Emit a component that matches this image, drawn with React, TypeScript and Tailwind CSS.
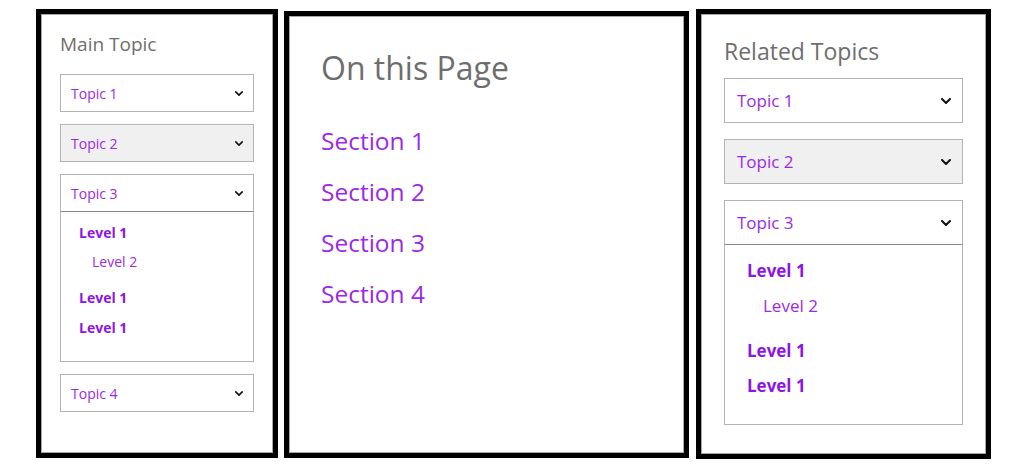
import type { ReactNode } from "react";

const font = { fontFamily: '"Open Sans", "Noto Sans", sans-serif' };

function Chevron({ className }: { className?: string }) {
  return (
    <svg viewBox="0 0 10 6" className={className} fill="none">
      <polyline
        points="1,1 5,5 9,1"
        stroke="#111"
        strokeWidth="2"
        strokeLinecap="round"
        strokeLinejoin="round"
      />
    </svg>
  );
}

function Frame({
  className,
  children,
}: {
  className?: string;
  children: ReactNode;
}) {
  return (
    <section
      className={
        "flex flex-col border-[5px] border-black bg-white shadow-[inset_0_0_0_1px_#a8a8a8] " +
        (className ?? "")
      }
    >
      {children}
    </section>
  );
}

// small dropdown row (left panel)
function SmallTopic({ label, shaded }: { label: string; shaded?: boolean }) {
  return (
    <div
      className={
        "flex h-[38px] items-center justify-between border border-[#b3b3b3] pl-[10px] pr-[10px] text-[14px] text-[#9a2ae6] " +
        (shaded ? "bg-[#f1f0f1]" : "bg-white")
      }
    >
      <span>{label}</span>
      <Chevron className="h-[5px] w-[8px]" />
    </div>
  );
}

function LargeTopic({ label, shaded }: { label: string; shaded?: boolean }) {
  return (
    <div
      className={
        "flex h-[45px] items-center justify-between border border-[#b3b3b3] pl-[12px] pr-[11px] text-[17px] text-[#9a2ae6] " +
        (shaded ? "bg-[#f1f0f1]" : "bg-white")
      }
    >
      <span>{label}</span>
      <Chevron className="h-[6px] w-[10px]" />
    </div>
  );
}

export default function App() {
  return (
    <div className="flex h-[473px] w-[1024px] bg-white pl-[36px] pt-[9px]" style={font}>
      {/* Main Topic */}
      <Frame className="h-[449px] w-[242px]">
        <div className="flex flex-col px-[19px] pt-[16px]">
          <h2 className="h-[29px] text-[19px] leading-[29px] text-[#6e6e6e]">Main Topic</h2>
          <div className="mt-[15px] flex flex-col">
            <SmallTopic label="Topic 1" />
            <div className="mt-[12px]">
              <SmallTopic label="Topic 2" shaded />
            </div>
            <div className="mt-[12px] flex flex-col">
              <div className="flex h-[38px] items-center justify-between border border-[#b3b3b3] border-b-[#8a8a8a] pl-[10px] pr-[10px] text-[14px] text-[#9a2ae6]">
                <span>Topic 3</span>
                <Chevron className="h-[5px] w-[8px]" />
              </div>
              <ul className="flex h-[150px] flex-col border border-t-0 border-[#b3b3b3] pl-[18px] pt-[10px]">
                <li className="h-[22px] text-[14px] font-bold leading-[22px] text-[#8d14e6]">Level 1</li>
                <li className="mt-[7px] h-[22px] pl-[13px] text-[14px] leading-[22px] text-[#9a2ae6]">Level 2</li>
                <li className="mt-[14px] h-[22px] text-[14px] font-bold leading-[22px] text-[#8d14e6]">Level 1</li>
                <li className="mt-[8px] h-[22px] text-[14px] font-bold leading-[22px] text-[#8d14e6]">Level 1</li>
              </ul>
            </div>
            <div className="mt-[12px]">
              <SmallTopic label="Topic 4" />
            </div>
          </div>
        </div>
      </Frame>

      {/* On this Page */}
      <Frame className="ml-[6px] mt-[2px] h-[447px] w-[405px]">
        <div className="flex flex-col pl-[32px] pt-[29px]">
          <h1 className="h-[46px] text-[32px] leading-[46px] text-[#6e6e6e]">On this Page</h1>
          <nav className="mt-[32px] flex flex-col gap-[15px] text-[24.5px] leading-[36px] text-[#9a2ae6]">
            <a>Section 1</a>
            <a>Section 2</a>
            <a>Section 3</a>
            <a>Section 4</a>
          </nav>
        </div>
      </Frame>

      {/* Related Topics */}
      <Frame className="ml-[7px] h-[450px] w-[295px]">
        <div className="flex flex-col px-[23px] pt-[20px]">
          <h2 className="h-[34px] text-[23px] leading-[34px] text-[#6e6e6e]">Related Topics</h2>
          <div className="mt-[10px] flex flex-col">
            <LargeTopic label="Topic 1" />
            <div className="mt-[16px]">
              <LargeTopic label="Topic 2" shaded />
            </div>
            <div className="mt-[16px] flex flex-col">
              <div className="flex h-[45px] items-center justify-between border border-[#b3b3b3] border-b-[#8a8a8a] pl-[12px] pr-[11px] text-[17px] text-[#9a2ae6]">
                <span>Topic 3</span>
                <Chevron className="h-[6px] w-[10px]" />
              </div>
              <ul className="flex h-[180px] flex-col border border-t-0 border-[#b3b3b3] pl-[22px] pt-[13px]">
                <li className="h-[26px] text-[17px] font-bold leading-[26px] text-[#8d14e6]">Level 1</li>
                <li className="mt-[9px] h-[26px] pl-[16px] text-[17px] leading-[26px] text-[#9a2ae6]">Level 2</li>
                <li className="mt-[19px] h-[26px] text-[17px] font-bold leading-[26px] text-[#8d14e6]">Level 1</li>
                <li className="mt-[9px] h-[26px] text-[17px] font-bold leading-[26px] text-[#8d14e6]">Level 1</li>
              </ul>
            </div>
          </div>
        </div>
      </Frame>
    </div>
  );
}
